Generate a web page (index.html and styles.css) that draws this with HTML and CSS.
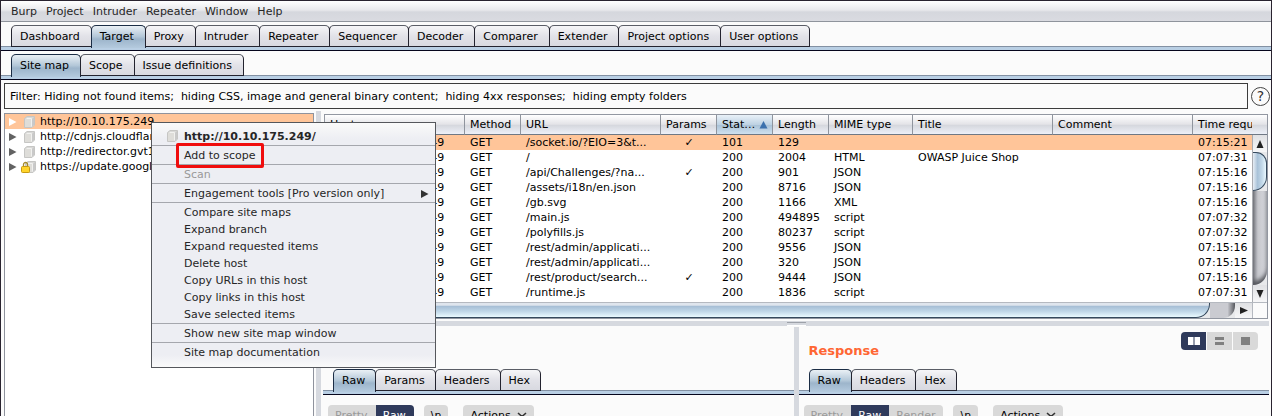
FILE: index.html
```
<!DOCTYPE html>
<html lang="en">
<head>
<meta charset="utf-8">
<title>Burp Suite</title>
<link rel="stylesheet" href="styles.css">
</head>
<body>
<svg class="defs" width="0" height="0" aria-hidden="true">
  <symbol id="host" viewBox="0 0 11 12">
    <path d="M0.5 2.5 3 .5h7.500v8.500L8 11.500H.5z" fill="#d9d9d7" stroke="#c6c6c4"/>
    <path d="M1 3h6.500v8H1z" fill="#deddd9"/>
    <path d="M8 3l2-2v8l-2 2z" fill="#c9c9c9"/>
    <path d="M2.500 2.500h5v8" fill="none" stroke="#f1f1ef"/>
  </symbol>
  <symbol id="arrow" viewBox="0 0 8 8"><path d="M0 0l7.500 4L0 8z" fill="currentColor"/></symbol>
  <symbol id="chevron" viewBox="0 0 10 6"><path d="M1 1l4 3.500L9 1" fill="none" stroke="#333" stroke-width="1.600"/></symbol>
</svg>
<div class="window">
  <nav class="menubar">
    <button>Burp</button><button>Project</button><button>Intruder</button><button>Repeater</button><button>Window</button><button>Help</button>
  </nav>
  <div class="tabs main-tabs">
    <button class="tab">Dashboard</button><button class="tab active">Target</button><button class="tab">Proxy</button><button class="tab">Intruder</button><button class="tab">Repeater</button><button class="tab">Sequencer</button><button class="tab">Decoder</button><button class="tab">Comparer</button><button class="tab">Extender</button><button class="tab">Project options</button><button class="tab">User options</button>
  </div>
  <div class="tabs main-tabs">
    <button class="tab active">Site map</button><button class="tab">Scope</button><button class="tab">Issue definitions</button>
  </div>
  <div class="filter-row">
    <button class="filter">Filter: Hiding not found items;  hiding CSS, image and general binary content;  hiding 4xx responses;  hiding empty folders</button>
    <button class="help" aria-label="Help">?</button>
  </div>
  <main class="split">
    <ul class="tree">
      <li class="selected"><svg class="arrow"><use href="#arrow"/></svg><svg class="host"><use href="#host"/></svg>http://10.10.175.249</li>
      <li><svg class="arrow"><use href="#arrow"/></svg><svg class="host"><use href="#host"/></svg>http://cdnjs.cloudflare.com</li>
      <li><svg class="arrow"><use href="#arrow"/></svg><svg class="host"><use href="#host"/></svg>http://redirector.gvt1.com</li>
      <li><svg class="arrow"><use href="#arrow"/></svg><svg class="host secure" viewBox="0 0 15 12"><use href="#host" x="4" width="11" height="12"/><path d="M2.500 6V3.500a2 2 0 0 1 4 0V6" fill="none" stroke="#a48a2c" stroke-width="1.300"/><rect x=".5" y="5.500" width="8" height="6" rx="1" fill="#ffd42a" stroke="#c79a10"/></svg>https://update.googleapis.com</li>
    </ul>
    <div class="divider-v"></div>
    <div class="detail">
      <section class="results">
        <div class="viewport">
          <table>
            <colgroup><col class="w-l"><col class="w-s"><col class="w-l"><col class="w-s"><col class="w-s"><col class="w-s"><col class="w-m"><col class="w-l"><col class="w-l"><col class="w-l"></colgroup>
            <thead><tr><th>Host</th><th>Method</th><th>URL</th><th>Params</th><th class="sorted"><span>Stat…<svg width="9" height="9" viewBox="0 0 9 9"><path d="M4.500 1L8.500 8.500H.5z" fill="#3c71ad"/></svg></span></th><th>Length</th><th>MIME type</th><th>Title</th><th>Comment</th><th>Time requested</th></tr></thead>
            <tbody>
              <tr class="selected"><td>http://10.10.175.249</td><td>GET</td><td>/socket.io/?EIO=3&amp;t...</td><td>✓</td><td>101</td><td>129</td><td></td><td></td><td></td><td>07:15:21</td></tr>
              <tr><td>http://10.10.175.249</td><td>GET</td><td>/</td><td></td><td>200</td><td>2004</td><td>HTML</td><td>OWASP Juice Shop</td><td></td><td>07:07:31</td></tr>
              <tr><td>http://10.10.175.249</td><td>GET</td><td>/api/Challenges/?na...</td><td>✓</td><td>200</td><td>901</td><td>JSON</td><td></td><td></td><td>07:15:16</td></tr>
              <tr><td>http://10.10.175.249</td><td>GET</td><td>/assets/i18n/en.json</td><td></td><td>200</td><td>8716</td><td>JSON</td><td></td><td></td><td>07:15:16</td></tr>
              <tr><td>http://10.10.175.249</td><td>GET</td><td>/gb.svg</td><td></td><td>200</td><td>1166</td><td>XML</td><td></td><td></td><td>07:15:16</td></tr>
              <tr><td>http://10.10.175.249</td><td>GET</td><td>/main.js</td><td></td><td>200</td><td>494895</td><td>script</td><td></td><td></td><td>07:07:32</td></tr>
              <tr><td>http://10.10.175.249</td><td>GET</td><td>/polyfills.js</td><td></td><td>200</td><td>80237</td><td>script</td><td></td><td></td><td>07:07:32</td></tr>
              <tr><td>http://10.10.175.249</td><td>GET</td><td>/rest/admin/applicati...</td><td></td><td>200</td><td>9556</td><td>JSON</td><td></td><td></td><td>07:15:16</td></tr>
              <tr><td>http://10.10.175.249</td><td>GET</td><td>/rest/admin/applicati...</td><td></td><td>200</td><td>320</td><td>JSON</td><td></td><td></td><td>07:15:15</td></tr>
              <tr><td>http://10.10.175.249</td><td>GET</td><td>/rest/product/search...</td><td>✓</td><td>200</td><td>9444</td><td>JSON</td><td></td><td></td><td>07:15:16</td></tr>
              <tr><td>http://10.10.175.249</td><td>GET</td><td>/runtime.js</td><td></td><td>200</td><td>1836</td><td>script</td><td></td><td></td><td>07:07:31</td></tr>
              <tr><td></td><td></td><td>/socket.io/?EIO=3&amp;t...</td><td>✓</td><td></td><td></td><td></td><td></td><td></td><td></td></tr>
            </tbody>
          </table>
        </div>
        <div class="side">
          <div class="head-corner"></div>
          <div class="scroll-v">
            <div class="step up"><svg width="8" height="8" viewBox="0 0 8 8"><path d="M4 0l3.500 8h-7z" fill="#222"/></svg></div>
            <div class="thumb-v"></div><div class="track-v"></div>
            <div class="step down"><svg width="8" height="8" viewBox="0 0 8 8"><path d="M4 8L.5 0h7z" fill="#222"/></svg></div>
          </div>
        </div>
        <div class="scroll-h">
          <div class="thumb-h"></div><div class="track-h"></div>
          <div class="step right"><svg width="8" height="7" viewBox="0 0 8 7"><path d="M0 0l8 3.500L0 7z" fill="#222"/></svg></div>
        </div>
        <div class="corner"></div>
      </section>
      <div class="divider-h"><i></i></div>
      <div class="messages">
        <section class="message">
          <header><h2>Request</h2></header>
          <div class="tabs"><button class="tab active">Raw</button><button class="tab">Params</button><button class="tab">Headers</button><button class="tab">Hex</button></div>
          <div class="tools">
            <div class="group"><button disabled>Pretty</button><button class="on">Raw</button></div>
            <button class="pill">\n</button>
            <button class="pill actions">Actions<svg width="10" height="6"><use href="#chevron"/></svg></button>
          </div>
        </section>
        <div class="divider-v"></div>
        <section class="message">
          <header><h2>Response</h2>
            <div class="views">
              <button class="on" aria-label="Side by side"><svg width="12" height="8" viewBox="0 0 12 8"><path d="M0 0h5.500v8H0zM6.500 0H12v8H6.500z" fill="#fff"/></svg></button>
              <button aria-label="Stacked"><svg width="9" height="8" viewBox="0 0 9 8"><path d="M0 0h9v3H0zM0 5h9v3H0z" fill="#808080"/></svg></button>
              <button aria-label="Single"><svg width="9" height="8" viewBox="0 0 9 8"><path d="M0 0h9v8H0z" fill="#808080"/></svg></button>
            </div>
          </header>
          <div class="tabs"><button class="tab active">Raw</button><button class="tab">Headers</button><button class="tab">Hex</button></div>
          <div class="tools">
            <div class="group"><button disabled>Pretty</button><button class="on">Raw</button><button disabled>Render</button></div>
            <button class="pill">\n</button>
            <button class="pill actions">Actions<svg width="10" height="6"><use href="#chevron"/></svg></button>
          </div>
        </section>
      </div>
    </div>
  </main>
  <div class="context" role="menu">
    <button class="title"><svg class="host"><use href="#host"/></svg>http://10.10.175.249/</button>
    <hr>
    <button class="marked">Add to scope</button>
    <hr>
    <button disabled>Scan</button>
    <hr>
    <button>Engagement tools [Pro version only]<svg class="more"><use href="#arrow"/></svg></button>
    <hr>
    <button>Compare site maps</button>
    <button>Expand branch</button>
    <button>Expand requested items</button>
    <button>Delete host</button>
    <button>Copy URLs in this host</button>
    <button>Copy links in this host</button>
    <button>Save selected items</button>
    <hr>
    <button>Show new site map window</button>
    <hr>
    <button>Site map documentation</button>
  </div>
</div>
</body>
</html>
```
FILE: styles.css
```
* { box-sizing: border-box; }
body { margin: 0; font: 11px/15px "DejaVu Sans", sans-serif; color: #000; }
button { margin: 0; padding: 0; border: 0; background: none; font: inherit; color: inherit; white-space: nowrap; }
svg { flex: none; }
.defs { position: absolute; }

.window { position: relative; display: flex; flex-direction: column; height: 100vh; overflow: hidden; background: #fbfbfb; border: 1px solid #29232f; border-bottom: 0; }

.menubar { display: flex; flex: none; gap: 9px; height: 21px; padding-left: 10px; align-items: center; color: #262626; background: linear-gradient(#fff, #e9e9ec 45%, #d5d7dd 55%, #dadbe1); border-bottom: 1px solid #8f949c; }

.tabs { display: flex; flex: none; height: 26px; padding-left: 10px; background: linear-gradient(#8391a3, #8391a3) 0 21px / 100% 1px no-repeat, linear-gradient(#b9cfe4, #b9cfe4) 0 22px / 100% 3px no-repeat; border-bottom: 1px solid #05051c; }
.main-tabs { margin-top: 3px; }
.tab { height: 22px; padding: 0 10px 0 8px; margin-right: -1px; border: 1px solid #23232f; border-top-color: #5a5d66; border-radius: 5px 5px 0 0; background: linear-gradient(#f6f6f8, #e2e2e8 50%, #d8d9e0); }
.main-tabs .tab { padding-right: 11px; }
.tab.active { height: 23px; padding-bottom: 1px; border-color: #1b2d45; border-bottom: 0; background: linear-gradient(#eaf0f5, #b3c7d8 48%, #9db5cb 60%, #b4cade); }

.filter-row { display: flex; flex: none; margin: 3px 1px 0 3px; gap: 3px; align-items: center; }
.filter { flex: 1; min-width: 0; height: 26px; padding: 0 5px; overflow: hidden; text-align: left; white-space: pre; border: 1px solid #3c3c3c; }
.help { width: 19px; height: 19px; border: 1px solid #444; border-radius: 50%; font-size: 14px; line-height: 17px; color: #333; }

.split { display: flex; flex: 1; min-height: 0; padding: 2px 1px 0 3px; }
.tree { flex: 0 0 310px; margin: 2px 2px 0 0; padding: 0; list-style: none; background: #fff; border: 1px solid #8f939d; border-bottom: 0; }
.tree li { display: flex; height: 15px; padding-left: 4px; align-items: center; color: #000; }
.tree .selected, .results .selected { background: #ffc599; }
.arrow { width: 8px; height: 8px; margin-right: 6px; color: #626262; }
.selected .arrow { color: #fff; }
.host { width: 13px; height: 12px; margin-right: 4px; }
.host.secure { width: 15px; margin-left: -2px; }
.divider-v { flex: 0 0 5px; background: #d6d9df; }
.detail { flex: 1; min-width: 0; display: flex; flex-direction: column; padding: 3px 1px 0 2px; }

.results { display: grid; grid-template: minmax(0, 1fr) 16px / minmax(0, 1fr) 15px; flex: 0 0 205px; min-height: 0; height: 205px; margin: 0 1px; background: #fff; border: 1px solid #9297a1; }
.viewport { min-height: 0; overflow: hidden; }
table { table-layout: fixed; width: 1008px; border-collapse: separate; border-spacing: 0; }
.w-l { width: 140px; }
.w-s { width: 56px; }
.w-m { width: 84px; }
th, .head-corner { height: 20px; background: linear-gradient(#fff, #e4e4e8 48%, #d6d8de 55%, #edf0f8); border-bottom: 1px solid #6f7884; }
th { padding: 0 0 0 5px; text-align: left; font-weight: normal; white-space: nowrap; overflow: hidden; border-right: 1px solid #8f949d; }
th.sorted { background: linear-gradient(#e9f1f8, #bed2e3 50%, #abc3d8 55%, #cfe1ef); }
.sorted span { display: flex; gap: 4px; align-items: center; }
td { height: 15px; padding: 0 0 0 5px; line-height: 15px; white-space: nowrap; overflow: hidden; }
td:nth-child(4) { padding: 0; text-align: center; }
.side { display: flex; flex-direction: column; min-height: 0; }
.head-corner { flex: none; }
.scroll-v { display: flex; flex: 1; min-height: 0; flex-direction: column; background: #e8e9eb; border-left: 1px solid #aaacb1; }
.step { display: flex; flex: none; align-items: center; justify-content: center; background: linear-gradient(#e0e1e4, #f7f7f8); }
.up, .down { height: 17px; }
.thumb-v { flex: none; height: 39px; border: 1px solid #35495d; border-left: 0; border-radius: 0 14px 18px 0; background: linear-gradient(90deg, #e7edf4, #a9c2d8 35%, #c3d9e9 70%, #eaf9ff); }
.track-v { flex: 1; border-bottom-right-radius: 14px; box-shadow: inset 0 -4px 4px #55575d; background: linear-gradient(90deg, #8a8b92, #c6c7cc 35%, #d9dae0); }
.scroll-h { display: flex; border-top: 1px solid #b5b9c0; background: #e8e9eb; }
.thumb-h { flex: 1; border-right: 1px solid #35495d; border-bottom: 1px solid #35495d; border-radius: 0 0 14px 0; background: linear-gradient(#dfe5ed, #dfe5ed 15%, #a7bfd6 25%, #c0d7e8 60%, #eafaff); }
.track-h { width: 25px; border-radius: 0 0 12px 0; background: linear-gradient(90deg, #cacbd1 70%, #55575d); }
.right { width: 17px; }
.corner { border-top: 1px solid #b5b9c0; border-left: 1px solid #b5b9c0; background: #fbfbfb; }

.divider-h { display: flex; flex: none; justify-content: center; height: 5px; margin-top: 2px; background: #d6d9df; }
.divider-h i { width: 19px; height: 4px; margin-top: 1px; border-top: 1px solid #9da1a9; border-bottom: 1px solid #fff; }
.messages { display: flex; flex: 1; min-height: 0; }
.messages .divider-v { margin-top: 1px; }
.message { flex: 1; min-width: 0; }
.message header { display: flex; justify-content: space-between; height: 43px; padding: 6px 11px 0 10px; }
h2 { margin: 0; padding-top: 11px; font-size: 13px; line-height: 16px; color: #ff6633; }
.views, .group { display: flex; }
.views { height: 18px; gap: 1px; border-radius: 4px; overflow: hidden; }
.views button { display: flex; width: 25px; align-items: center; justify-content: center; background: #d9d9d9; }
.on, .views .on { background: #2f3a5b; color: #fff; }
.tools { display: flex; padding: 10px 5px 0; }
.tools button { height: 20px; padding: 0 7px; background: #d9d9d9; }
.tools .group button { padding-right: 8px; }
.tools .on { background: #2f3a5b; }
.tools button:disabled { color: #999; }
.group { margin-right: 10px; border-radius: 4px; overflow: hidden; }
.tools .pill { margin-right: 15px; border-radius: 4px; }
.tools .actions { display: flex; gap: 6px; align-items: center; }

.context { position: absolute; left: 150px; top: 121px; display: flex; flex-direction: column; width: 285px; padding: 4px 0 6px; color: #262626; background: linear-gradient(#fafafa, #edeef3 16px, #edeef3 calc(100% - 12px), #fafafa); border: 1px solid #55575c; }
.context button { display: flex; height: 17px; padding-left: 32px; align-items: center; }
.context button:disabled { color: #999; }
.context hr { width: 100%; height: 1px; margin: 0 0 1px; border: 0; background: #a5a7ad; }
.context .title { height: 18px; padding-left: 14px; font-weight: bold; }
.context .title .host { margin-right: 5px; }
.context .more { width: 8px; height: 8px; margin: 0 6px 0 auto; color: #333; }
.context .marked { width: 88px; height: 25px; margin: -4px 0 -4px 24px; padding-left: 5px; border: 3px solid #f00d0d; border-radius: 2px; z-index: 1; }
```
